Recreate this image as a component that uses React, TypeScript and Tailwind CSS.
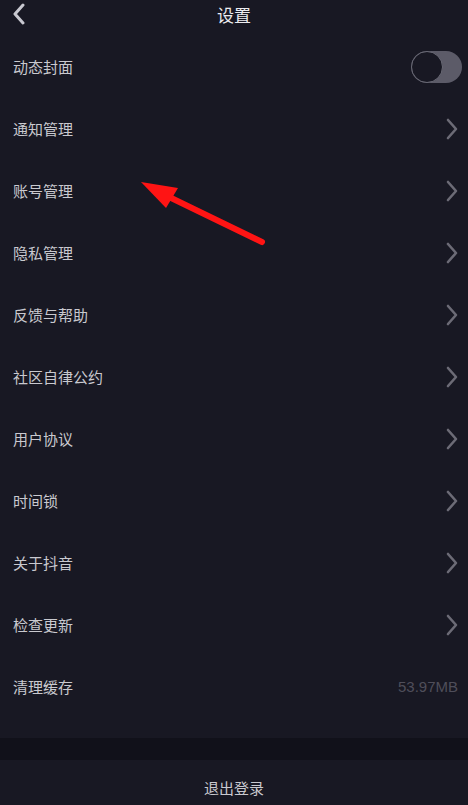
const rows = [
  "通知管理",
  "账号管理",
  "隐私管理",
  "反馈与帮助",
  "社区自律公约",
  "用户协议",
  "时间锁",
  "关于抖音",
  "检查更新",
];

const font = { fontFamily: '"Noto Sans CJK SC", "Noto Sans", sans-serif' };

const Row = ({ label, children }: { label: string; children?: React.ReactNode }) => (
  <div className="flex h-[62px] items-center justify-between pl-[13px] pr-[6px]">
    <span className="text-[15px] text-[#c9c9cf]">{label}</span>
    {children}
  </div>
);

const Chevron = () => (
  <svg width="14" height="22" viewBox="0 0 14 22" className="mr-[3px]">
    <path d="M3 2 L11 11 L3 20" fill="none" stroke="#6c6b76" strokeWidth="2.6" strokeLinecap="round" strokeLinejoin="round" />
  </svg>
);

export default function App() {
  return (
    <div className="relative h-[805px] w-[468px] overflow-hidden bg-[#181823]" style={font}>
      {/* header */}
      <div className="relative flex h-[30px] items-center justify-center">
        <svg className="absolute left-[12px] top-[3px]" width="16" height="22" viewBox="0 0 16 22">
          <path d="M11 2 L3 11 L11 20" fill="none" stroke="#c8c8d0" strokeWidth="3" strokeLinecap="round" strokeLinejoin="round" />
        </svg>
        <span className="text-[17px] text-[#ececf0]">设置</span>
      </div>

      <div className="flex flex-col pt-[6px]">
        <Row label="动态封面">
          <div className="relative h-[32px] w-[51px] rounded-full bg-[#5c5b68]">
            <div className="absolute left-0 top-0 h-[32px] w-[32px] rounded-full border-[1.5px] border-[#6a6a76] bg-[#181823]" />
          </div>
        </Row>
        {rows.map((r) => (
          <Row key={r} label={r}>
            <Chevron />
          </Row>
        ))}
        <Row label="清理缓存">
          <span className="mr-[4px] text-[15px] text-[#4f4e5a]" style={{ fontFamily: '"Liberation Sans", Arial, sans-serif' }}>
            53.97MB
          </span>
        </Row>
      </div>

      <div className="mt-[20px] h-[22px] bg-[#11111a]" />
      <div className="flex h-[56px] items-center justify-center">
        <span className="text-[15px] text-[#c9c9cf]">退出登录</span>
      </div>

      {/* red annotation arrow */}
      <svg className="absolute left-0 top-0" width="468" height="805" viewBox="0 0 468 805">
        <line x1="262" y1="242" x2="165" y2="195" stroke="#ff1414" strokeWidth="6" strokeLinecap="round" />
        <polygon points="141,182 178,188 166,208" fill="#ff1414" />
      </svg>
    </div>
  );
}
